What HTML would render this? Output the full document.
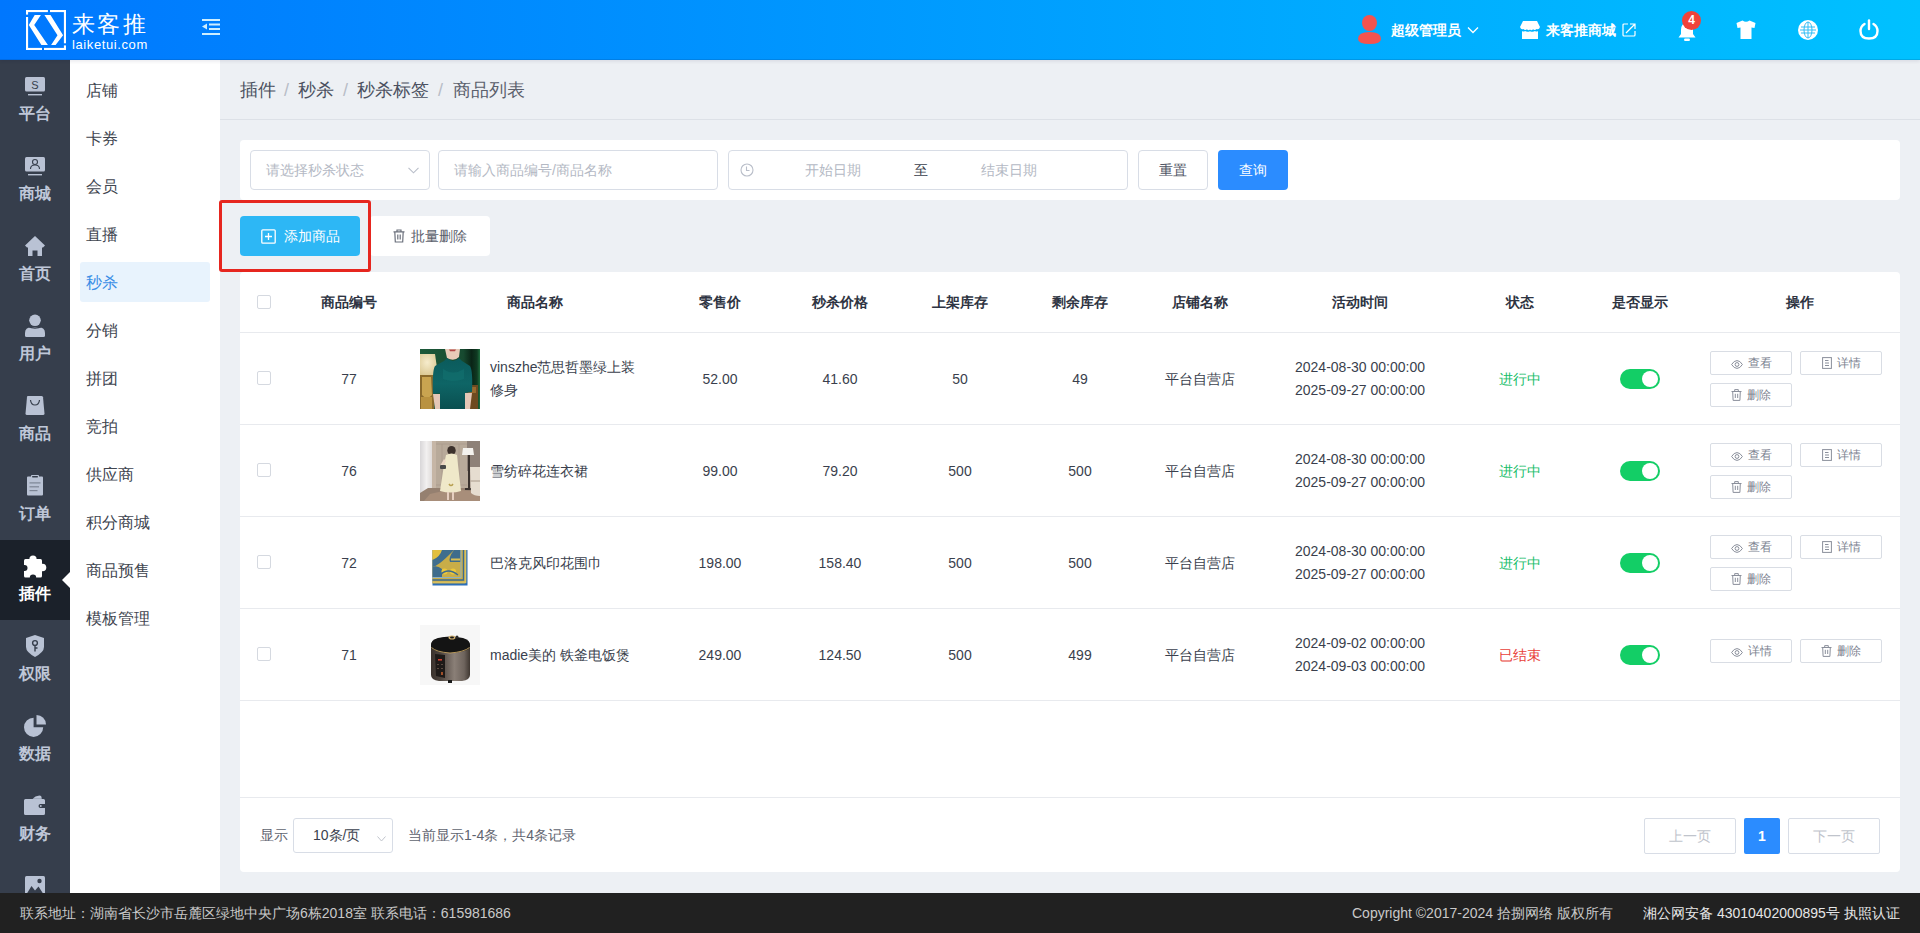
<!DOCTYPE html>
<html><head><meta charset="utf-8">
<style>
*{box-sizing:border-box;margin:0;padding:0}
html,body{width:1920px;height:933px;overflow:hidden;font-family:"Liberation Sans",sans-serif;background:#edf0f4;color:#3a3f4d}
.abs{position:absolute}
#hdr{left:0;top:0;width:1920px;height:60px;background:linear-gradient(90deg,#0077fe 0%,#00c1ff 100%);z-index:10;box-shadow:inset 0 -1px 0 rgba(0,40,90,0.15),0 2px 3px rgba(0,20,60,0.07)}
#side{left:0;top:60px;width:70px;height:833px;background:#363e4c;overflow:hidden}
.si{position:absolute;left:0;width:70px;height:80px;text-align:center;color:#bfc7d8;font-size:16px;font-weight:bold}
.si svg{position:absolute;left:25px;top:16px}
.si .t{position:absolute;left:0;width:70px;top:44px;line-height:20px}
.si.on{background:#1b212a;color:#fff}
#sub{left:70px;top:60px;width:150px;height:833px;background:#fff}
.mi{position:absolute;left:16px;margin-top:2px;font-size:16px;color:#40454f;line-height:20px}
#crumb{left:220px;top:60px;width:1700px;height:60px;border-bottom:1px solid #dde1e7}
#crumb span{position:absolute;top:19px;font-size:18px;line-height:22px;color:#4b5060}
#crumb .sl{color:#b8bdc7}
#filter{left:240px;top:140px;width:1660px;height:60px;background:#fff;border-radius:4px}
.inp{position:absolute;top:10px;height:40px;border:1px solid #d8dde6;border-radius:4px;background:#fff;font-size:14px;color:#b4b9c4;line-height:38px}
.btn{position:absolute;border-radius:4px;font-size:14px;text-align:center}
#tbl{left:240px;top:272px;width:1660px;height:600px;background:#fff;border-radius:4px}
.row{position:absolute;left:0;width:1660px;border-bottom:1px solid #e8eaee}
.c{position:absolute;text-align:center;font-size:14px;line-height:20px}
.hd .c{font-weight:bold;color:#2e3442;top:20px}
.cb{position:absolute;left:17px;width:14px;height:14px;border:1px solid #d5d9e0;border-radius:2px;background:#fff}
.ob{position:absolute;width:82px;height:24px;border:1px solid #d9dde4;border-radius:2px;font-size:12px;color:#7d8391;line-height:22px;text-align:center}
.ob svg{vertical-align:-2px;margin-right:5px}
.tg{position:absolute;left:1380px;width:40px;height:20px;border-radius:10px;background:#13ce66}
.tg:after{content:"";position:absolute;right:2px;top:2px;width:16px;height:16px;border-radius:50%;background:#fff}
#foot{left:0;top:893px;width:1920px;height:40px;background:#212121;color:#c9c9c9;font-size:14px;line-height:40px}
</style></head>
<body>
<!-- HEADER -->
<div id="hdr" class="abs">
 <svg class="abs" style="left:26px;top:10px" width="40" height="40" viewBox="0 0 40 40" fill="#fff">
  <rect x="0" y="0" width="21.9" height="2.1"/><rect x="24" y="0" width="16" height="2.1"/>
  <rect x="37.9" y="0" width="2.1" height="33.3"/><rect x="37.9" y="35.4" width="2.1" height="4.6"/>
  <rect x="0" y="37.9" width="16" height="2.1"/><rect x="18" y="37.9" width="22" height="2.1"/>
  <rect x="0" y="0" width="2.1" height="4.6"/><rect x="0" y="7" width="2.1" height="33"/>
  <path d="M8.7 4.9H14.9L8.2 15.1L21.9 34.9H15.4L2.8 15.1Z"/>
  <path d="M18.4 4.9H24.5L37.1 25.3L29.6 34.9H25.1L31.5 25.3Z"/>
 </svg>
 <div class="abs" style="left:72px;top:8px;font-size:23px;line-height:32px;color:#fff;letter-spacing:2.3px;font-weight:300">来客推</div>
 <div class="abs" style="left:72px;top:37px;font-size:13px;line-height:16px;color:#fff;letter-spacing:0.6px">laiketui.com</div>
 <svg class="abs" style="left:202px;top:18px" width="18" height="18" viewBox="0 0 18 18" fill="#cdeeff">
  <rect x="0" y="1" width="18" height="2"/><rect x="7" y="5.5" width="11" height="2"/><rect x="7" y="10" width="11" height="2"/><rect x="0" y="15" width="18" height="2"/>
  <path d="M0 8.5 L5 5.5 V11.5Z"/>
 </svg>
 <!-- user -->
 <svg class="abs" style="left:1357px;top:15px" width="25" height="30" viewBox="0 0 25 30" fill="#f4534f">
  <ellipse cx="12.5" cy="8" rx="7.5" ry="8"/><path d="M1 24 Q1 17 12.5 17 Q24 17 24 24 Q24 29 12.5 29 Q1 29 1 24Z"/>
 </svg>
 <div class="abs" style="left:1391px;top:20px;font-size:14px;line-height:20px;color:#fff;font-weight:bold">超级管理员</div>
 <svg class="abs" style="left:1467px;top:26px" width="12" height="8" viewBox="0 0 12 8" fill="none" stroke="#fff" stroke-width="1.3"><path d="M1 1.5 L6 6.5 L11 1.5"/></svg>
 <!-- store -->
 <svg class="abs" style="left:1520px;top:20px" width="20" height="20" viewBox="0 0 20 20" fill="#fff">
  <path d="M3 1H17L20 7Q19 10 16.5 9Q15 11 13 9.3Q11.5 11 10 9.5Q8.5 11 7 9.3Q5 11 3.5 9Q1 10 0 7Z"/>
  <path d="M2 11Q3.5 12 5 11Q7 12.5 10 11.3Q13 12.5 15 11Q16.5 12 18 11V19H2Z"/>
 </svg>
 <div class="abs" style="left:1546px;top:20px;font-size:14px;line-height:20px;color:#fff;font-weight:bold">来客推商城</div>
 <svg class="abs" style="left:1622px;top:23px" width="14" height="14" viewBox="0 0 14 14" fill="none" stroke="#fff" stroke-width="1.2">
  <path d="M6 1H2Q1 1 1 2V12Q1 13 2 13H12Q13 13 13 12V8"/><path d="M8 1H13V6M13 1L7 7M4 10L9 5"/>
 </svg>
 <!-- bell -->
 <svg class="abs" style="left:1678px;top:22px" width="18" height="20" viewBox="0 0 18 20" fill="#fff">
  <path d="M9 1Q15 1 15 8V12L17.5 15.5H0.5L3 12V8Q3 1 9 1Z"/><rect x="6" y="16.5" width="6" height="2.5" rx="1.2"/>
 </svg>
 <div class="abs" style="left:1682px;top:11px;width:19px;height:19px;border-radius:50%;background:#f0433a;color:#fff;font-size:12px;font-weight:bold;line-height:19px;text-align:center">4</div>
 <!-- shirt -->
 <svg class="abs" style="left:1736px;top:20px" width="20" height="20" viewBox="0 0 20 20" fill="#fff">
  <path d="M6.5 0.5Q10 3 13.5 0.5L19.5 3L18.5 8L15.5 7.5V19H4.5V7.5L1.5 8L0.5 3Z"/>
 </svg>
 <!-- globe -->
 <svg class="abs" style="left:1798px;top:20px" width="20" height="20" viewBox="0 0 20 20">
  <circle cx="10" cy="10" r="10" fill="#fff"/>
  <g fill="none" stroke="#32bdf5" stroke-width="1"><ellipse cx="10" cy="10" rx="4" ry="8"/><path d="M10 2V18M3 7H17M3 13H17M2 10H18"/></g>
 </svg>
 <!-- power -->
 <svg class="abs" style="left:1859px;top:19px" width="20" height="21" viewBox="0 0 20 21" fill="none" stroke="#fff" stroke-width="2.4" stroke-linecap="round">
  <path d="M5.5 5Q1.5 7.5 1.5 12Q1.5 19.5 10 19.5Q18.5 19.5 18.5 12Q18.5 7.5 14.5 5"/><path d="M10 1.5V10"/>
 </svg>
</div>

<!-- SIDEBAR -->
<div id="side" class="abs">
 <div class="si" style="top:0">
  <svg width="20" height="20" viewBox="0 0 20 20" style="top:16px"><rect x="0" y="1" width="20" height="14.5" rx="1.5" fill="#b9c2d4"/><rect x="3" y="18" width="14" height="1.4" fill="#b9c2d4"/><text x="10" y="12.5" font-size="11" font-weight="normal" text-anchor="middle" fill="#363e4c" font-family="Liberation Sans">S</text></svg>
  <div class="t">平台</div></div>
 <div class="si" style="top:80px">
  <svg width="20" height="20" viewBox="0 0 20 20" style="top:16px"><rect x="0" y="1" width="20" height="14.5" rx="1.5" fill="#b9c2d4"/><rect x="3" y="18" width="14" height="1.4" fill="#b9c2d4"/><g fill="none" stroke="#363e4c" stroke-width="1.1"><circle cx="10" cy="6" r="2.5"/><path d="M5.5 13Q5.5 9 10 9Q14.5 9 14.5 13"/></g></svg>
  <div class="t">商城</div></div>
 <div class="si" style="top:160px">
  <svg width="20" height="20" viewBox="0 0 20 20" style="top:16px"><path d="M10 0L20 9.5L18 11.5H17V20H12.5V14.5H7.5V20H3V11.5H2L0 9.5Z" fill="#b9c2d4"/></svg>
  <div class="t">首页</div></div>
 <div class="si" style="top:240px">
  <svg width="20" height="24" viewBox="0 0 20 24" style="top:14px"><circle cx="10" cy="6.3" r="5.8" fill="#b9c2d4"/><path d="M0 19Q0 13.2 6.5 13.2H13.5Q20 13.2 20 19V21.5Q20 23 18.5 23H1.5Q0 23 0 21.5Z" fill="#b9c2d4"/><path d="M3 12.6Q10 15.5 17 12.6" stroke="#363e4c" stroke-width="1.2" fill="none"/></svg>
  <div class="t">用户</div></div>
 <div class="si" style="top:320px">
  <svg width="20" height="20" viewBox="0 0 20 20" style="top:16px"><path d="M2.5 0H16.5Q17.8 0 18 1.3L19.5 17.5Q19.5 19 18 19H2Q0.5 19 0.5 17.5L2 1.3Q2.2 0 2.5 0Z" fill="#b9c2d4"/><path d="M5.5 4Q6 9 10 9Q14 9 14.5 4" fill="none" stroke="#363e4c" stroke-width="1.2"/></svg>
  <div class="t">商品</div></div>
 <div class="si" style="top:400px">
  <svg width="20" height="21" viewBox="0 0 20 21" style="top:15px"><path d="M3 1.5H6V0.8Q6 0 7 0H13Q14 0 14 0.8V1.5H17Q18 1.5 18 2.5V19.5Q18 20.5 17 20.5H3Q2 20.5 2 19.5V2.5Q2 1.5 3 1.5Z" fill="#b9c2d4"/><rect x="7" y="1" width="6" height="1.5" rx="0.7" fill="#363e4c"/><g fill="#7d8595"><rect x="4.5" y="7.3" width="11" height="1.2"/><rect x="4.5" y="11.2" width="9.5" height="1.2"/><rect x="4.5" y="15" width="8" height="1.2"/></g></svg>
  <div class="t">订单</div></div>
 <div class="si on" style="top:480px">
  <svg width="23" height="23" viewBox="0 0 23 23" style="left:24px;top:15px"><g fill="#fff"><rect x="0" y="4" width="18" height="18.5" rx="1.5"/><circle cx="9" cy="4" r="3.6"/><circle cx="18.5" cy="12.5" r="3.8"/></g><g fill="#1b212a"><circle cx="0.5" cy="13" r="3"/><circle cx="9" cy="22.8" r="3.2"/></g></svg>
  <div class="t">插件</div>
  <div class="abs" style="left:62px;top:32px;width:0;height:0;border-top:8px solid transparent;border-bottom:8px solid transparent;border-right:8px solid #fff"></div></div>
 <div class="si" style="top:560px">
  <svg width="20" height="22" viewBox="0 0 20 22" style="left:26px;top:15px"><path d="M9 0L18 3V12Q18 17 9 22Q0 17 0 12V3Z" fill="#b9c2d4"/><g fill="none" stroke="#363e4c" stroke-width="1.4"><circle cx="9" cy="8" r="2.4"/><path d="M9 10.4V16.5M9 13H11.5"/></g></svg>
  <div class="t">权限</div></div>
 <div class="si" style="top:640px">
  <svg width="22" height="22" viewBox="0 0 22 22" style="left:24px;top:15px"><path d="M9.6 2.7A9.6 9.6 0 1 0 19.2 12.3H9.6Z" fill="#b9c2d4"/><path d="M12.5 0A9.6 9.6 0 0 1 22 9.6H12.5Z" fill="#b9c2d4"/></svg>
  <div class="t">数据</div></div>
 <div class="si" style="top:720px">
  <svg width="22" height="21" viewBox="0 0 22 21" style="left:24px;top:15px"><path d="M8.5 4.2Q11 1 15.5 0.6Q17.6 0.6 17.6 2.5V4.2Z" fill="#b9c2d4"/><path d="M8.5 4.2H17.6" stroke="#5f6878" stroke-width="0.8"/><path d="M1.5 4H19.5Q21 4 21 5.5V9H16.5Q14.5 9 14.5 11Q14.5 13 16.5 13H21V18.5Q21 20 19.5 20H1.5Q0 20 0 18.5V5.5Q0 4 1.5 4Z" fill="#b9c2d4"/><circle cx="16.8" cy="11" r="0.9" fill="#b9c2d4"/></svg>
  <div class="t">财务</div></div>
 <div class="si" style="top:800px">
  <svg width="20" height="20" viewBox="0 0 20 20" style="left:25px;top:16px"><rect x="0" y="0" width="20" height="20" rx="1.5" fill="#b9c2d4"/><path d="M1 19L6.5 10L10 14.5L13.5 10.5L19 19Z" fill="#363e4c"/><circle cx="14.5" cy="5" r="2.2" fill="#363e4c"/></svg>
  <div class="t">图库</div></div>
</div>

<!-- SUBMENU -->
<div id="sub" class="abs">
 <div class="mi" style="top:19px">店铺</div>
 <div class="mi" style="top:67px">卡券</div>
 <div class="mi" style="top:115px">会员</div>
 <div class="mi" style="top:163px">直播</div>
 <div class="abs" style="left:10px;top:202px;width:130px;height:40px;border-radius:3px;background:#e8f3fd"></div>
 <div class="mi" style="top:211px;color:#3a8ee6">秒杀</div>
 <div class="mi" style="top:259px">分销</div>
 <div class="mi" style="top:307px">拼团</div>
 <div class="mi" style="top:355px">竞拍</div>
 <div class="mi" style="top:403px">供应商</div>
 <div class="mi" style="top:451px">积分商城</div>
 <div class="mi" style="top:499px">商品预售</div>
 <div class="mi" style="top:547px">模板管理</div>
</div>

<!-- BREADCRUMB -->
<div id="crumb" class="abs">
 <span style="left:20px">插件</span><span class="sl" style="left:64px">/</span>
 <span style="left:78px">秒杀</span><span class="sl" style="left:123px">/</span>
 <span style="left:137px">秒杀标签</span><span class="sl" style="left:218px">/</span>
 <span style="left:233px;color:#5b606c">商品列表</span>
</div>

<!-- FILTER -->
<div id="filter" class="abs">
 <div class="inp" style="left:10px;width:180px;padding-left:15px">请选择秒杀状态
  <svg class="abs" style="left:157px;top:16px" width="11" height="7" viewBox="0 0 11 7" fill="none" stroke="#b9bec9" stroke-width="1.1"><path d="M0.5 0.8L5.5 5.8L10.5 0.8"/></svg></div>
 <div class="inp" style="left:198px;width:280px;padding-left:15px">请输入商品编号/商品名称</div>
 <div class="inp" style="left:488px;width:400px">
  <svg class="abs" style="left:11px;top:12px" width="14" height="14" viewBox="0 0 14 14" fill="none" stroke="#b9bec9" stroke-width="1.1"><circle cx="7" cy="7" r="6"/><path d="M6.5 3.5V7.5H9.5"/></svg>
  <span class="abs" style="left:76px">开始日期</span>
  <span class="abs" style="left:185px;color:#3a3f4d">至</span>
  <span class="abs" style="left:252px">结束日期</span></div>
 <div class="btn" style="left:898px;top:10px;width:70px;height:40px;border:1px solid #d8dde6;line-height:38px;color:#4f5565;background:#fff">重置</div>
 <div class="btn" style="left:978px;top:10px;width:70px;height:40px;line-height:40px;color:#fff;background:#2b8cff">查询</div>
</div>
<!-- ACTION BUTTONS -->
<div class="btn abs" style="left:240px;top:216px;width:120px;height:40px;background:#2db7f5;color:#fff;line-height:40px">
 <svg style="vertical-align:-3px;margin-right:8px" width="15" height="15" viewBox="0 0 15 15" fill="none" stroke="#fff" stroke-width="1.3"><rect x="0.8" y="0.8" width="13.4" height="13.4" rx="1"/><path d="M7.5 4V11M4 7.5H11"/></svg>添加商品</div>
<div class="btn abs" style="left:370px;top:216px;width:120px;height:40px;background:#fff;color:#5b606c;line-height:40px">
 <svg style="vertical-align:-2px;margin-right:6px" width="12" height="14" viewBox="0 0 12 14" fill="none" stroke="#6b707c" stroke-width="1.2"><path d="M0.5 2.8H11.5M4 2.8V1H8V2.8M1.8 2.8L2.3 13H9.7L10.2 2.8M4.8 5.5V10.5M7.2 5.5V10.5"/></svg>批量删除</div>
<div class="abs" style="left:219px;top:200px;width:152px;height:72px;border:3px solid #e6261f;border-radius:3px"></div>

<!-- TABLE -->
<div id="tbl" class="abs">
<div class="row hd" style="top:0;height:61px">
<div class="cb" style="top:23px"></div>
<div class="c" style="left:49px;width:120px;top:20px;">商品编号</div>
<div class="c" style="left:235px;width:120px;top:20px;">商品名称</div>
<div class="c" style="left:420px;width:120px;top:20px;">零售价</div>
<div class="c" style="left:540px;width:120px;top:20px;">秒杀价格</div>
<div class="c" style="left:660px;width:120px;top:20px;">上架库存</div>
<div class="c" style="left:780px;width:120px;top:20px;">剩余库存</div>
<div class="c" style="left:900px;width:120px;top:20px;">店铺名称</div>
<div class="c" style="left:1060px;width:120px;top:20px;">活动时间</div>
<div class="c" style="left:1220px;width:120px;top:20px;">状态</div>
<div class="c" style="left:1340px;width:120px;top:20px;">是否显示</div>
<div class="c" style="left:1500px;width:120px;top:20px;">操作</div>
</div>
<div class="row" style="top:61px;height:92px">
<div class="cb" style="top:38px"></div>
<div class="c" style="left:49px;width:120px;top:36px;">77</div>
<div class="abs img1" style="left:180px;top:16px;width:60px;height:60px"><svg width="60" height="60" viewBox="0 0 60 60">
<defs><linearGradient id="g1a" x1="0" y1="0" x2="1" y2="0"><stop offset="0" stop-color="#1d5a3a"/><stop offset="0.72" stop-color="#174a30"/><stop offset="0.86" stop-color="#0a2416"/><stop offset="0.95" stop-color="#0f3a22"/><stop offset="1" stop-color="#1f7040"/></linearGradient>
<linearGradient id="g1b" x1="0" y1="0" x2="0" y2="1"><stop offset="0" stop-color="#0b5b5c"/><stop offset="0.5" stop-color="#0e6566"/><stop offset="1" stop-color="#0a4f50"/></linearGradient>
<radialGradient id="g1c" cx="0.4" cy="0.4" r="0.7"><stop offset="0" stop-color="#f6eccc"/><stop offset="1" stop-color="#d9c690"/></radialGradient></defs>
<rect width="60" height="60" fill="url(#g1a)"/>
<path d="M1 5H15L18 26H0V5Z" fill="url(#g1c)"/>
<rect x="0" y="26" width="14" height="34" fill="#8a6a2c"/><path d="M2 28H11L12 46Q7 52 2 46Z" fill="#c9a450"/><rect x="1" y="48" width="11" height="12" fill="#b99240"/>
<path d="M46 36H58V60H46Z" fill="#6e4a20"/><rect x="48" y="38" width="8" height="6" fill="#9a6a2e"/>
<path d="M25 0H40L39 8Q34 13 27 9Z" fill="#e7cbb8"/><path d="M29 0.5H36L35 2.2H30Z" fill="#b24848"/>
<path d="M27 9Q33 15 39 9L42 12L50 17Q53 22 52 43L45 44V60H20V44L13 45Q12 22 15 17L24 12Z" fill="url(#g1b)"/>
<path d="M23 20Q33 27 44 20L44 30Q33 34 23 30Z" fill="#137170" opacity="0.6"/>
<path d="M13 45H20V60H15Z" fill="#e4c7b6"/><path d="M45 44H52L50 60H45Z" fill="#e4c7b6"/>
</svg></div>
<div class="c" style="left:250px;width:156px;top:23px;text-align:left;line-height:23px">vinszhe范思哲墨绿上装修身</div>
<div class="c" style="left:420px;width:120px;top:36px;">52.00</div>
<div class="c" style="left:540px;width:120px;top:36px;">41.60</div>
<div class="c" style="left:660px;width:120px;top:36px;">50</div>
<div class="c" style="left:780px;width:120px;top:36px;">49</div>
<div class="c" style="left:900px;width:120px;top:36px;">平台自营店</div>
<div class="c" style="left:1020px;width:200px;top:23px;line-height:23px">2024-08-30 00:00:00<br>2025-09-27 00:00:00</div>
<div class="c" style="left:1220px;width:120px;top:36px;color:#19be6b">进行中</div>
<div class="tg" style="top:36px"></div>
<div class="ob" style="left:1470px;top:18px"><svg width="12" height="9" viewBox="0 0 12 9" fill="none" stroke="#8a8f9b" stroke-width="1"><path d="M0.6 4.5Q3 0.6 6 0.6Q9 0.6 11.4 4.5Q9 8.4 6 8.4Q3 8.4 0.6 4.5Z"/><circle cx="6" cy="4.5" r="1.9"/></svg>查看</div>
<div class="ob" style="left:1560px;top:18px"><svg width="10" height="12" viewBox="0 0 10 12" fill="none" stroke="#8a8f9b" stroke-width="1"><rect x="0.6" y="0.6" width="8.8" height="10.8"/><path d="M3 3.5H6.5M3 6H7M3 8.5H7"/></svg>详情</div>
<div class="ob" style="left:1470px;top:50px"><svg width="11" height="12" viewBox="0 0 11 12" fill="none" stroke="#8a8f9b" stroke-width="1"><path d="M0.5 2.5H10.5M3.7 2.5V0.6H7.3V2.5M1.7 2.5L2.1 11.4H8.9L9.3 2.5M4.3 4.8V9M6.7 4.8V9"/></svg>删除</div>
</div>
<div class="row" style="top:153px;height:92px">
<div class="cb" style="top:38px"></div>
<div class="c" style="left:49px;width:120px;top:36px;">76</div>
<div class="abs img2" style="left:180px;top:16px;width:60px;height:60px"><svg width="60" height="60" viewBox="0 0 60 60">
<defs><linearGradient id="g2c" x1="0" y1="0" x2="1" y2="0"><stop offset="0" stop-color="#d8d6d8"/><stop offset="0.5" stop-color="#f2f0f0"/><stop offset="1" stop-color="#dcd8d6"/></linearGradient></defs>
<rect width="60" height="60" fill="#a89a8e"/>
<rect x="15" y="0" width="33" height="47" fill="#b8aa9a"/>
<g stroke="#a89a8a" stroke-width="0.7"><path d="M22 3V44M30 3V44M39 3V44M16 3H47M16 44H47"/></g>
<rect x="47" y="0" width="13" height="30" fill="#8e8178"/>
<rect x="0" y="0" width="13" height="60" fill="url(#g2c)"/><rect x="12" y="0" width="4" height="52" fill="#c6b6a6"/>
<path d="M8 47H60V60H0V52Z" fill="#958070"/><path d="M10 53L32 48L60 51V60H4Z" fill="#a88e7a"/>
<path d="M43 7H53L54 14H42Z" fill="#f4f2ee"/><rect x="48" y="14" width="2" height="34" fill="#3a322e"/><rect x="45" y="47" width="8" height="2" fill="#3a322e"/>
<path d="M50 26H60V55Q54 55 51 52Z" fill="#e6ddd0"/><path d="M50.5 40H60" stroke="#a8998a" stroke-width="1"/>
<ellipse cx="31.5" cy="9.5" rx="4.2" ry="4.6" fill="#3c312c"/>
<path d="M26 14Q31.5 11 37 14L38 24L41 50Q31 53 20 50L24 24Z" fill="#efe8c9"/>
<path d="M24 18L20 25L22.5 26L26 20Z" fill="#ecd6c4"/><rect x="20" y="24" width="6" height="4" rx="1" fill="#4a4a4a"/>
<path d="M29 43Q31 46 33 43" stroke="#b8a050" stroke-width="1.5" fill="none"/>
<path d="M28 51V59M33 51V59" stroke="#e6cfc0" stroke-width="2"/>
</svg></div>
<div class="c" style="left:250px;width:156px;top:35px;text-align:left;line-height:23px">雪纺碎花连衣裙</div>
<div class="c" style="left:420px;width:120px;top:36px;">99.00</div>
<div class="c" style="left:540px;width:120px;top:36px;">79.20</div>
<div class="c" style="left:660px;width:120px;top:36px;">500</div>
<div class="c" style="left:780px;width:120px;top:36px;">500</div>
<div class="c" style="left:900px;width:120px;top:36px;">平台自营店</div>
<div class="c" style="left:1020px;width:200px;top:23px;line-height:23px">2024-08-30 00:00:00<br>2025-09-27 00:00:00</div>
<div class="c" style="left:1220px;width:120px;top:36px;color:#19be6b">进行中</div>
<div class="tg" style="top:36px"></div>
<div class="ob" style="left:1470px;top:18px"><svg width="12" height="9" viewBox="0 0 12 9" fill="none" stroke="#8a8f9b" stroke-width="1"><path d="M0.6 4.5Q3 0.6 6 0.6Q9 0.6 11.4 4.5Q9 8.4 6 8.4Q3 8.4 0.6 4.5Z"/><circle cx="6" cy="4.5" r="1.9"/></svg>查看</div>
<div class="ob" style="left:1560px;top:18px"><svg width="10" height="12" viewBox="0 0 10 12" fill="none" stroke="#8a8f9b" stroke-width="1"><rect x="0.6" y="0.6" width="8.8" height="10.8"/><path d="M3 3.5H6.5M3 6H7M3 8.5H7"/></svg>详情</div>
<div class="ob" style="left:1470px;top:50px"><svg width="11" height="12" viewBox="0 0 11 12" fill="none" stroke="#8a8f9b" stroke-width="1"><path d="M0.5 2.5H10.5M3.7 2.5V0.6H7.3V2.5M1.7 2.5L2.1 11.4H8.9L9.3 2.5M4.3 4.8V9M6.7 4.8V9"/></svg>删除</div>
</div>
<div class="row" style="top:245px;height:92px">
<div class="cb" style="top:38px"></div>
<div class="c" style="left:49px;width:120px;top:36px;">72</div>
<div class="abs img3" style="left:180px;top:16px;width:60px;height:60px"><svg width="60" height="60" viewBox="0 0 60 60">
<rect width="60" height="60" fill="#fff"/>
<rect x="12.5" y="17" width="35" height="35.5" fill="#2c6fb8"/>
<rect x="12.5" y="17" width="33" height="33.5" fill="#c8ad48"/>
<path d="M12.5 17H22Q20 24 12.5 27Z" fill="#e2c03e"/>
<path d="M22 17H34L30 21Q24 27 20 30Q16 33 12.5 34V27Q20 24 22 17Z" fill="#3f6e8e"/>
<path d="M34 17H40.5V29H30Q28 25 34 17Z" fill="#3e6c8c"/>
<rect x="31" y="25.5" width="9" height="2" fill="#d8bf55"/>
<path d="M12.5 34Q17 32 22 36V44H12.5Z" fill="#3e6c8c"/>
<circle cx="24.5" cy="38.5" r="3" fill="#edc83a"/><circle cx="33" cy="38.5" r="3" fill="#edc83a"/>
<path d="M20 42Q28 34 38 42" stroke="#3e6c8c" stroke-width="1.2" fill="none"/>
<path d="M12.5 44.5H41V17" fill="none" stroke="#8fb0c0" stroke-width="1"/>
<path d="M12.5 47H43.5V17" fill="none" stroke="#3a6a90" stroke-width="1.4"/>
<path d="M12.5 49.3H45.5V17" fill="none" stroke="#d8c060" stroke-width="1.6"/>
</svg></div>
<div class="c" style="left:250px;width:156px;top:35px;text-align:left;line-height:23px">巴洛克风印花围巾</div>
<div class="c" style="left:420px;width:120px;top:36px;">198.00</div>
<div class="c" style="left:540px;width:120px;top:36px;">158.40</div>
<div class="c" style="left:660px;width:120px;top:36px;">500</div>
<div class="c" style="left:780px;width:120px;top:36px;">500</div>
<div class="c" style="left:900px;width:120px;top:36px;">平台自营店</div>
<div class="c" style="left:1020px;width:200px;top:23px;line-height:23px">2024-08-30 00:00:00<br>2025-09-27 00:00:00</div>
<div class="c" style="left:1220px;width:120px;top:36px;color:#19be6b">进行中</div>
<div class="tg" style="top:36px"></div>
<div class="ob" style="left:1470px;top:18px"><svg width="12" height="9" viewBox="0 0 12 9" fill="none" stroke="#8a8f9b" stroke-width="1"><path d="M0.6 4.5Q3 0.6 6 0.6Q9 0.6 11.4 4.5Q9 8.4 6 8.4Q3 8.4 0.6 4.5Z"/><circle cx="6" cy="4.5" r="1.9"/></svg>查看</div>
<div class="ob" style="left:1560px;top:18px"><svg width="10" height="12" viewBox="0 0 10 12" fill="none" stroke="#8a8f9b" stroke-width="1"><rect x="0.6" y="0.6" width="8.8" height="10.8"/><path d="M3 3.5H6.5M3 6H7M3 8.5H7"/></svg>详情</div>
<div class="ob" style="left:1470px;top:50px"><svg width="11" height="12" viewBox="0 0 11 12" fill="none" stroke="#8a8f9b" stroke-width="1"><path d="M0.5 2.5H10.5M3.7 2.5V0.6H7.3V2.5M1.7 2.5L2.1 11.4H8.9L9.3 2.5M4.3 4.8V9M6.7 4.8V9"/></svg>删除</div>
</div>
<div class="row" style="top:337px;height:92px">
<div class="cb" style="top:38px"></div>
<div class="c" style="left:49px;width:120px;top:36px;">71</div>
<div class="abs img4" style="left:180px;top:16px;width:60px;height:60px"><svg width="60" height="60" viewBox="0 0 60 60">
<defs><linearGradient id="g4" x1="0" y1="0" x2="1" y2="0"><stop offset="0" stop-color="#3a322d"/><stop offset="0.25" stop-color="#4e453f"/><stop offset="0.6" stop-color="#8a7f77"/><stop offset="0.85" stop-color="#6e645d"/><stop offset="1" stop-color="#3f3731"/></linearGradient></defs>
<rect width="60" height="60" fill="#f7f7f7"/>
<path d="M11 20Q11 16 16 14Q30 10 44 14Q50 16 50 20V50Q50 55 42 56H19Q11 55 11 50Z" fill="url(#g4)"/>
<path d="M11 20Q11 15 18 13Q30 10 43 13Q50 15 50 20V22Q48 27 30 28Q13 27 11 22Z" fill="#141414"/>
<path d="M11.5 22.5Q16 27 30 28Q44 27 49.5 22.5" fill="none" stroke="#c2a060" stroke-width="0.9"/>
<ellipse cx="32" cy="12.5" rx="3.5" ry="2" fill="#d0b070"/><ellipse cx="32" cy="12.5" rx="2" ry="1.1" fill="#1a1a1a"/><circle cx="37" cy="12" r="1.5" fill="#2a2a2a"/>
<path d="M15 29L25 30V53L16 51Z" fill="#1e1a18"/>
<rect x="18" y="34" width="4" height="1.6" fill="#d04030"/>
<g fill="#5a4a40"><rect x="17" y="39" width="2" height="1"/><rect x="21" y="39" width="2" height="1"/><rect x="17" y="43" width="2" height="1"/><rect x="21" y="43" width="2" height="1"/></g>
<rect x="21" y="47" width="2" height="3" fill="#a0502a"/>
<rect x="28" y="55" width="4" height="3" fill="#1a1a1a"/>
</svg></div>
<div class="c" style="left:250px;width:156px;top:35px;text-align:left;line-height:23px">madie美的 铁釜电饭煲</div>
<div class="c" style="left:420px;width:120px;top:36px;">249.00</div>
<div class="c" style="left:540px;width:120px;top:36px;">124.50</div>
<div class="c" style="left:660px;width:120px;top:36px;">500</div>
<div class="c" style="left:780px;width:120px;top:36px;">499</div>
<div class="c" style="left:900px;width:120px;top:36px;">平台自营店</div>
<div class="c" style="left:1020px;width:200px;top:23px;line-height:23px">2024-09-02 00:00:00<br>2024-09-03 00:00:00</div>
<div class="c" style="left:1220px;width:120px;top:36px;color:#e8413a">已结束</div>
<div class="tg" style="top:36px"></div>
<div class="ob" style="left:1470px;top:30px"><svg width="12" height="9" viewBox="0 0 12 9" fill="none" stroke="#8a8f9b" stroke-width="1"><path d="M0.6 4.5Q3 0.6 6 0.6Q9 0.6 11.4 4.5Q9 8.4 6 8.4Q3 8.4 0.6 4.5Z"/><circle cx="6" cy="4.5" r="1.9"/></svg>详情</div>
<div class="ob" style="left:1560px;top:30px"><svg width="11" height="12" viewBox="0 0 11 12" fill="none" stroke="#8a8f9b" stroke-width="1"><path d="M0.5 2.5H10.5M3.7 2.5V0.6H7.3V2.5M1.7 2.5L2.1 11.4H8.9L9.3 2.5M4.3 4.8V9M6.7 4.8V9"/></svg>删除</div>
</div>
<div class="abs" style="left:0;top:525px;width:1660px;height:1px;background:#e8eaee"></div>
<div class="abs" style="left:20px;top:553px;font-size:14px;line-height:20px;color:#5f6470">显示</div>
<div class="abs" style="left:53px;top:546px;width:100px;height:35px;border:1px solid #d8dde6;border-radius:3px;font-size:14px;line-height:33px;color:#3a3f4d;padding-left:19px">10条/页<svg class="abs" style="left:83px;top:17px" width="9" height="6" viewBox="0 0 9 6" fill="none" stroke="#c0c4cc" stroke-width="1"><path d="M0.5 0.5L4.5 5L8.5 0.5"/></svg></div>
<div class="abs" style="left:168px;top:553px;font-size:14px;line-height:20px;color:#5f6470">当前显示1-4条，共4条记录</div>
<div class="abs" style="left:1404px;top:546px;width:92px;height:36px;border:1px solid #d8dde6;border-radius:2px;font-size:14px;line-height:34px;text-align:center;color:#c0c4cc">上一页</div>
<div class="abs" style="left:1504px;top:546px;width:36px;height:36px;border-radius:2px;background:#2b8cff;font-size:14px;line-height:36px;text-align:center;color:#fff;font-weight:bold">1</div>
<div class="abs" style="left:1548px;top:546px;width:92px;height:36px;border:1px solid #d8dde6;border-radius:2px;font-size:14px;line-height:34px;text-align:center;color:#c0c4cc">下一页</div>
</div>

<!-- FOOTER -->
<div id="foot" class="abs">
 <span class="abs" style="left:20px;top:0">联系地址：湖南省长沙市岳麓区绿地中央广场6栋2018室 联系电话：615981686</span>
 <span class="abs" style="left:1352px;top:0">Copyright ©2017-2024 拾捌网络 版权所有</span>
 <span class="abs" style="left:1643px;top:0;color:#e6e6e6">湘公网安备 43010402000895号 执照认证</span>
</div>
</body></html>
